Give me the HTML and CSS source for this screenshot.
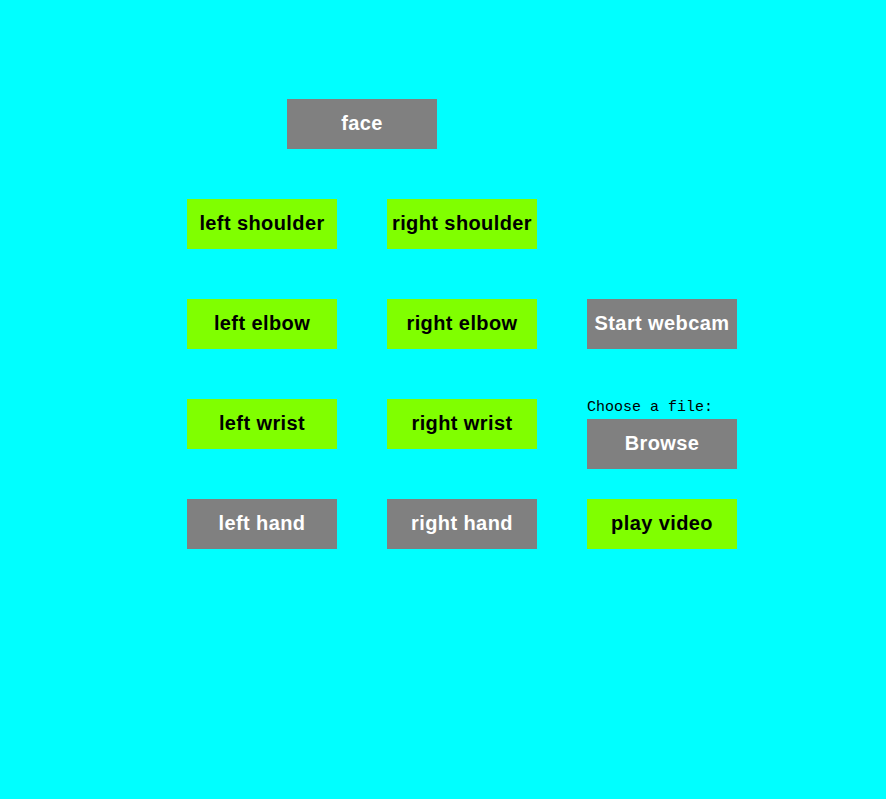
FILE: index.html
```html
<!DOCTYPE html>
<html>
<head>
<meta charset="utf-8">
<link rel="stylesheet" href="styles.css">
</head>
<body>
<div class="board">
  <button class="btn gray face">face</button>
  <button class="btn green r2 c1">left shoulder</button>
  <button class="btn green r2 c2">right shoulder</button>
  <button class="btn green r3 c1">left elbow</button>
  <button class="btn green r3 c2">right elbow</button>
  <button class="btn gray r3 c3">Start webcam</button>
  <button class="btn green r4 c1">left wrist</button>
  <button class="btn green r4 c2">right wrist</button>
  <div class="file r4 c3">
    <label class="file-label">Choose a file:</label>
    <button class="btn gray">Browse</button>
  </div>
  <button class="btn gray r5 c1">left hand</button>
  <button class="btn gray r5 c2">right hand</button>
  <button class="btn green r5 c3">play video</button>
</div>
</body>
</html>
```
FILE: styles.css
```css
html, body {
  margin: 0;
  padding: 0;
  background: #00ffff;
  height: 100%;
}
.board {
  display: grid;
  grid-template-columns: repeat(3, 150px);
  grid-template-rows: repeat(5, 50px);
  column-gap: 50px;
  row-gap: 50px;
  padding: 99px 0 0 187px;
}
.btn {
  width: 150px;
  height: 50px;
  border: none;
  margin: 0;
  padding: 0 0 1px 0;
  box-sizing: border-box;
  font-family: "Liberation Sans", Arial, sans-serif;
  font-weight: bold;
  font-size: 20px;
  letter-spacing: 0.4px;
  white-space: nowrap;
  display: flex;
  align-items: center;
  justify-content: center;
}
.gray { background: #808080; color: #ffffff; }
.green { background: #80ff00; color: #000000; }
.face { grid-row: 1; grid-column: 1 / 3; justify-self: center; }
.r2 { grid-row: 2; }
.r3 { grid-row: 3; }
.r4 { grid-row: 4; }
.r5 { grid-row: 5; }
.c1 { grid-column: 1; }
.c2 { grid-column: 2; }
.c3 { grid-column: 3; }
.file {
  display: flex;
  flex-direction: column;
  align-self: start;
}
.file-label {
  font-family: "Liberation Mono", "Courier New", monospace;
  font-size: 15px;
  line-height: 18px;
  height: 20px;
  color: #000;
}
```
